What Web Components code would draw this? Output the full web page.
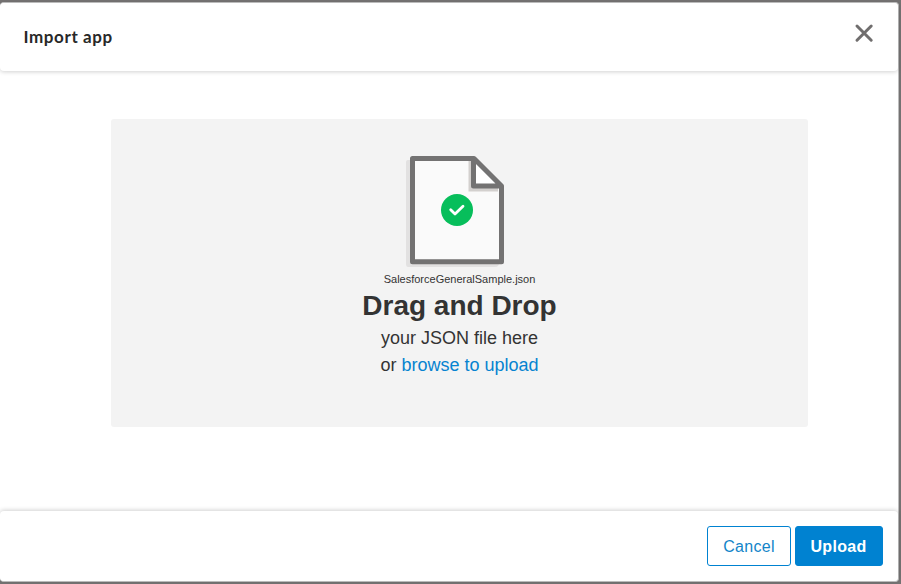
<!DOCTYPE html>
<html lang="en"><head><meta charset="utf-8"><title>Import app</title>
<style>html,body{margin:0;height:100%;overflow:hidden;background:#747272}</style></head>
<body><import-dialog></import-dialog>
<script>
const define=(name,html)=>{
  const t=document.createElement('template');t.innerHTML=html;
  customElements.define(name,class extends HTMLElement{
    constructor(){super();this.attachShadow({mode:'open'}).append(t.content.cloneNode(true));}
  });
};
define('dialog-header',`<style>
:host{display:flex;box-sizing:border-box;height:68px;padding:0 23px 0 23.500px;justify-content:space-between;background:#fff;border-radius:4px;box-shadow:0 1px 4px rgba(0,0,0,.18)}
h1{margin:20px 0 0;font:700 17px/28px Lato,sans-serif;letter-spacing:.6px;color:#282828}
svg{display:block;margin-top:19px;width:22px;height:22px}
</style><h1><slot></slot></h1>
<svg viewBox="0 0 22 22" fill="none" stroke="#706e6e" stroke-width="3" stroke-linecap="round"><path d="M4 4 18.2 18.2M18.2 4 4 18.2"/></svg>`);
define('file-icon',`<style>:host{display:block;width:100px;height:114px}svg{display:block}</style>
<svg width="100" height="114" viewBox="0 0 100 114">
<path d="M1 7Q1 5 3 5H61V37H94V108Q94 112 90 112H3Q1 112 1 109Z" fill="#e2e1e1"/>
<path d="M7.5 3.5H69L96.500 31V106.700H7.500Z" fill="#fafafa"/>
<path d="M65.500 6V34.500H93" fill="none" stroke="#d3d0ce" stroke-width="4"/>
<path d="M68.500 3.500V31H96.500Z" fill="#fff"/>
<path d="M7.500 3.500H69L96.500 31V106.700H7.500ZM68.500 3.500V31H96.500" fill="none" stroke="#737272" stroke-width="5" stroke-linejoin="round"/>
<circle cx="52" cy="55" r="16" fill="#07be5b"/>
<path d="M45.700 54.700 50 58.900 58 51.300" fill="none" stroke="#fff" stroke-width="2.800" stroke-linecap="round" stroke-linejoin="round"/>
</svg>`);
define('drop-zone',`<style>
:host{display:flex;flex-direction:column;align-items:center;box-sizing:border-box;width:697px;height:308px;padding-top:36px;background:#f3f3f3;border-radius:3px;color:#333;font-family:"Liberation Sans",sans-serif}
file-icon{margin-right:9px}
.name{font-size:11px;line-height:14px;margin-top:3px}
h2{margin:1px 0 0;font-size:28px;line-height:38px}
p{margin:0;font-size:18px;line-height:27px}
a{color:#0683d0}
</style><file-icon></file-icon><div class="name"><slot name="file"></slot></div>
<h2>Drag and Drop</h2><p>your JSON file here</p><p>or <a>browse to upload</a></p>`);
define('action-button',`<style>
:host{display:flex;box-sizing:border-box;width:84px;height:40px;padding-top:2px;align-items:center;justify-content:center;border:1px solid #0082d1;border-radius:3px;color:#1285c9;background:#fff;font:16px/20px "Liberation Sans",sans-serif;letter-spacing:.32px}
:host([primary]){width:88px;padding-right:1px;background:#0082d1;color:#fff;font-weight:700}
</style><slot></slot>`);
define('dialog-footer',`<style>
:host{display:flex;box-sizing:border-box;height:70px;justify-content:flex-end;gap:4px;padding:15px 15px 0 0;background:#fff;border-radius:4px;box-shadow:0 -1px 4px rgba(0,0,0,.18)}
</style><slot></slot>`);
define('import-dialog',`<style>
:host{display:grid;grid-template-rows:68px 1fr 70px;box-sizing:border-box;margin-top:2px;width:899px;height:580px;background:#fff;border-radius:4px;border-right:1px solid #bdbdbd;border-bottom:1px solid #c4c4c4;border-top:1px solid #c4c4c4}
main{padding:48px 0 0 111px}
</style><dialog-header>Import app</dialog-header>
<main><drop-zone><span slot="file">SalesforceGeneralSample.json</span></drop-zone></main>
<dialog-footer><action-button>Cancel</action-button><action-button primary>Upload</action-button></dialog-footer>`);
</script></body></html>
